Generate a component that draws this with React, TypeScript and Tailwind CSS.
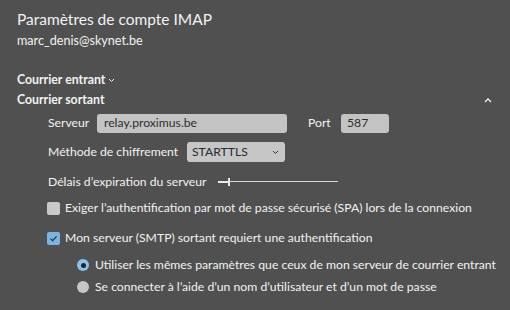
import * as React from 'react';

const font = { fontFamily: 'Lato, "Noto Sans", sans-serif' };

function Checkbox({ checked }: { checked?: boolean }) {
  if (checked) {
    return (
      <span className="flex size-[13px] shrink-0 items-center justify-center rounded-[2px] bg-[#7ab4e0]">
        <svg width="9" height="9" viewBox="0 0 9 9" fill="none">
          <path d="M1.5 4.6 L3.6 6.6 L7.6 2.4" stroke="#1f2a33" strokeWidth="1.1" />
        </svg>
      </span>
    );
  }
  return <span className="size-[13px] shrink-0 rounded-[2px] bg-[#c9c9c9]" />;
}

function Radio({ checked }: { checked?: boolean }) {
  if (checked) {
    return (
      <span className="flex size-[12px] shrink-0 items-center justify-center rounded-full bg-[#8cc2ea]">
        <span className="size-[5px] rounded-full bg-[#1c2630]" />
      </span>
    );
  }
  return <span className="size-[12px] shrink-0 rounded-full bg-[#c6c6c6]" />;
}

export default function App() {
  return (
    <div
      style={font}
      className="flex h-[310px] w-[510px] flex-col overflow-hidden whitespace-nowrap bg-[#505050] text-[12.2px] text-[#f2f2f2]"
    >
      <div className="ml-[17px] mt-[6px] text-[15.5px] leading-[26px]">Paramètres de compte IMAP</div>
      <div className="ml-[17px] text-[12.6px] leading-[18px]">marc_denis@skynet.be</div>

      <div className="ml-[17px] mt-[21px] flex items-center gap-[3px] text-[12.3px] font-bold leading-[18px]">
        Courrier entrant
        <svg width="7" height="5" viewBox="0 0 7 5" className="mt-[1px]">
          <path d="M1 1 L3.5 3.5 L6 1" stroke="#f2f2f2" strokeWidth="1" fill="none" />
        </svg>
      </div>
      <div className="mt-[2px] flex items-center justify-between pl-[17px] pr-[18px] text-[12.3px] font-bold leading-[18px]">
        Courrier sortant
        <svg width="8" height="5" viewBox="0 0 8 5">
          <path d="M1 4 L4 1 L7 4" stroke="#f2f2f2" strokeWidth="1.3" fill="none" />
        </svg>
      </div>

      <div className="ml-[48px] mt-[4px] flex h-[20px] items-center">
        <span className="w-[49px] shrink-0">Serveur</span>
        <div className="flex h-[19px] w-[190px] shrink-0 items-center rounded-[3px] bg-[#c3c3c3] pl-[7px] text-[12.2px] text-[#2e2e2e]">
          relay.proximus.be
        </div>
        <span className="ml-[21px] w-[33px] shrink-0">Port</span>
        <div className="flex h-[19px] w-[48px] shrink-0 items-center rounded-[3px] bg-[#c3c3c3] pl-[6px] text-[12.2px] text-[#2e2e2e]">
          587
        </div>
      </div>

      <div className="ml-[48px] mt-[9px] flex h-[20px] items-center">
        <span className="w-[139px] shrink-0">Méthode de chiffrement</span>
        <div className="flex h-[20px] w-[98px] shrink-0 items-center justify-between rounded-[3px] bg-[#c6c6c6] pl-[5px] pr-[6px] text-[12.2px] text-[#2a2a2a]">
          STARTTLS
          <svg width="7" height="5" viewBox="0 0 7 5">
            <path d="M1 1 L3.5 3.5 L6 1" stroke="#333" strokeWidth="1" fill="none" />
          </svg>
        </div>
      </div>

      <div className="ml-[48px] mt-[10px] flex h-[20px] items-center">
        <span className="w-[170px] shrink-0">Délais d’expiration du serveur</span>
        <div className="relative h-[8px] w-[120px]">
          <div className="absolute left-0 top-[3px] h-[1px] w-full bg-[#d8d8d8]" />
          <div className="absolute left-0 top-[3px] h-[2px] w-[11px] bg-[#e8e8e8]" />
          <div className="absolute left-[10px] top-0 h-[8px] w-[2px] bg-[#e8e8e8]" />
        </div>
      </div>

      <div className="ml-[47px] mt-[6px] flex h-[20px] items-center gap-[5px]">
        <Checkbox />
        <span>Exiger l’authentification par mot de passe sécurisé (SPA) lors de la connexion</span>
      </div>

      <div className="ml-[47px] mt-[10px] flex h-[20px] items-center gap-[5px]">
        <Checkbox checked />
        <span>Mon serveur (SMTP) sortant requiert une authentification</span>
      </div>

      <div className="ml-[77px] mt-[7px] flex h-[20px] items-center gap-[6px]">
        <Radio checked />
        <span>Utiliser les mêmes paramètres que ceux de mon serveur de courrier entrant</span>
      </div>

      <div className="ml-[77px] mt-[2px] flex h-[20px] items-center gap-[6px]">
        <Radio />
        <span>Se connecter à l’aide d’un nom d’utilisateur et d’un mot de passe</span>
      </div>
    </div>
  );
}
